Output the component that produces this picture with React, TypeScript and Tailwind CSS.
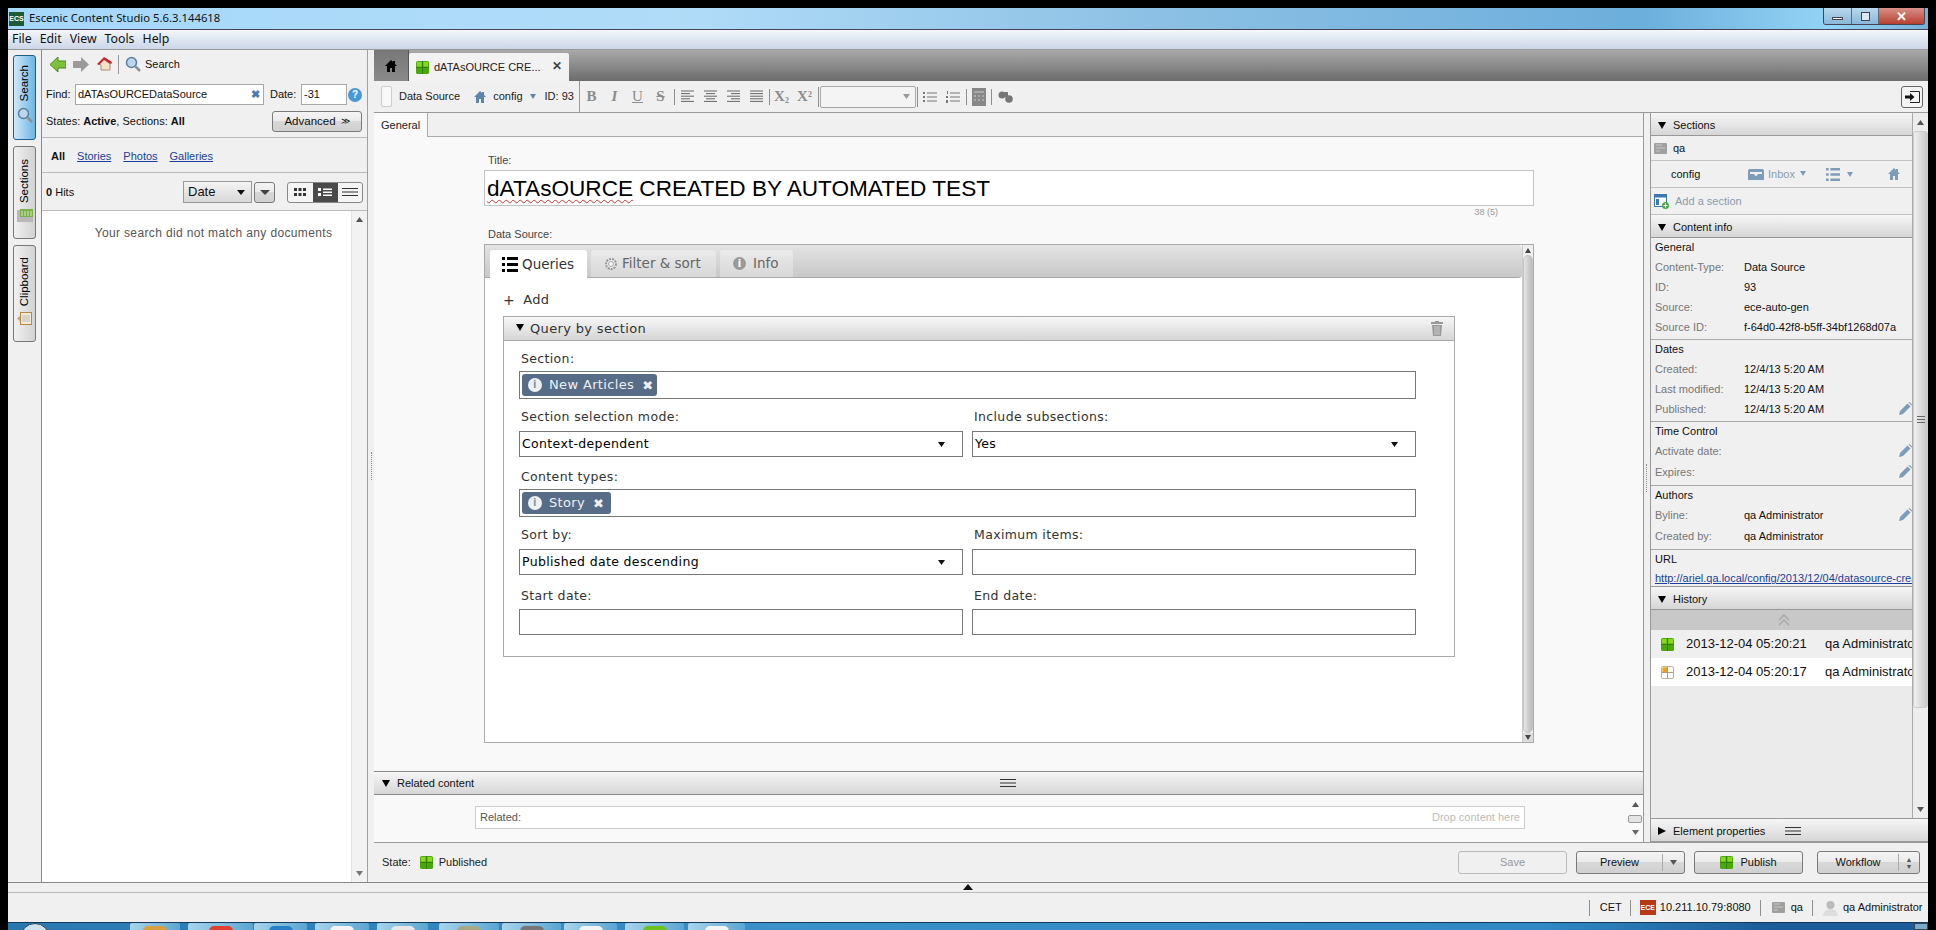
import React from 'react';

const SANS = 'font-["Liberation_Sans",Arial,sans-serif]';
const thinBtn = 'border border-[#7a7a7a] rounded-[3px] bg-[linear-gradient(#f4f4f4_0%,#ececec_45%,#d8d8d8_50%,#d0d0d0_100%)]';
const headBg = 'bg-[linear-gradient(#f6f6f6,#d6d6d6)]';

const Tri = ({ right }: { right?: boolean }) => (
  <svg width="10" height="10" viewBox="0 0 10 10" className="shrink-0">
    {right ? <path d="M1 1 L9 5 L1 9 Z" fill="#000" /> : <path d="M1 2 H9 L5 9 Z" fill="#000" />}
  </svg>
);

const Caret = ({ color = '#222', w = 8 }: { color?: string; w?: number }) => (
  <svg width={w} height="5" viewBox="0 0 8 5" preserveAspectRatio="none" className="shrink-0">
    <path d="M0 0 H8 L4 5 Z" fill={color} />
  </svg>
);

const StateIcon = ({ size = 14, draft }: { size?: number; draft?: boolean }) => (
  <svg width={size} height={size} viewBox="0 0 14 14" className="shrink-0">
    {draft ? (
      <>
        <rect x="0.5" y="0.5" width="13" height="13" rx="1.5" fill="#fff" stroke="#b0a898" />
        <rect x="1.5" y="1.5" width="5" height="5" fill="#f0a020" />
        <path d="M7 1 V13 M1 7 H13" stroke="#b09070" />
      </>
    ) : (
      <>
        <rect x="0" y="0" width="14" height="14" rx="2" fill="#4aa80a" />
        <rect x="1" y="1" width="5" height="5" fill="#8ad81a" />
        <rect x="8" y="1" width="5" height="5" fill="#8ad81a" />
        <path d="M7 0 V14 M0 7 H14" stroke="#2f7d06" />
      </>
    )}
  </svg>
);

const Pencil = () => (
  <svg width="13" height="13" viewBox="0 0 13 13" className="shrink-0">
    <path d="M0 13 L1 9 L8.5 1.5 L11.5 4.5 L4 12 Z" fill="#7d9cb8" />
    <path d="M9.5 0.5 L10.5 0 L13 2.5 L12.5 3.5 Z" fill="#7d9cb8" />
  </svg>
);

const HomeIcon = ({ color = '#000', size = 12 }: { color?: string; size?: number }) => (
  <svg width={size} height={size} viewBox="0 0 12 12" className="shrink-0">
    <path d="M6 0 L8 2 V1 H10 V4 L12 6 H10 V12 H7 V8 H5 V12 H2 V6 H0 Z" fill={color} />
  </svg>
);

const SectionIcon = () => (
  <svg width="13" height="11" viewBox="0 0 13 11" className="shrink-0">
    <rect width="13" height="11" rx="1" fill="#a0a0a0" />
    <path d="M2 2 H8 M2 5 H11 M2 8 H6" stroke="#c8c8c8" />
  </svg>
);

const ListIcon = ({ color = '#000', w = 16 }: { color?: string; w?: number }) => (
  <svg width={w} height={w} viewBox="0 0 16 16" className="shrink-0">
    <path d="M0 1 H3 V4 H0 Z M0 7 H3 V10 H0 Z M0 13 H3 V16 H0 Z M5 1 H16 V4 H5 Z M5 7 H16 V10 H5 Z M5 13 H16 V16 H5 Z" fill={color} />
  </svg>
);

const Lines = () => (
  <svg width="16" height="8" viewBox="0 0 16 8" className="shrink-0">
    <path d="M0 0.5 H16 M0 4 H16 M0 7.5 H16" stroke="#333" />
  </svg>
);

const Magnifier = ({ size = 16 }: { size?: number }) => (
  <svg width={size} height={size} viewBox="0 0 16 16" className="shrink-0">
    <circle cx="6.5" cy="6.5" r="5" fill="#bcd6ee" stroke="#5a7fa0" strokeWidth="1.5" />
    <path d="M10.5 10.5 L15 15" stroke="#8a8f96" strokeWidth="2.5" />
  </svg>
);

const Splitter = () => (
  <div className="w-[6px] shrink-0 bg-[#f0f0f0] flex items-center justify-center">
    <div className="w-0 h-[28px] border-l border-dotted border-[#888]" />
  </div>
);

const RailTab = ({ label, active, h, icon }: { label: string; active?: boolean; h: string; icon: React.ReactNode }) => (
  <div
    className={`${h} w-[23px] rounded-[3px] border flex flex-col-reverse items-center justify-start pb-[16px] gap-[6px] ${
      active
        ? 'border-[#1d5f8a] bg-[linear-gradient(90deg,#cfe8f8,#6db5e3)]'
        : 'border-[#777] bg-[linear-gradient(90deg,#f1f1f1,#d2d2d2)]'
    }`}
  >
    {icon}
    <span className="[writing-mode:vertical-rl] rotate-180 text-[11.5px] leading-none text-black">{label}</span>
  </div>
);

const Rail = () => (
  <div className={`w-[34px] shrink-0 border-r border-[#8a8a8a] bg-[#f0f0f0] pl-[5px] pt-[5px] flex flex-col gap-[6px] ${SANS}`}>
    <RailTab label="Search" active h="h-[85px]" icon={<Magnifier />} />
    <RailTab
      label="Sections"
      h="h-[93px]"
      icon={
        <svg width="16" height="13" viewBox="0 0 16 13">
          <rect y="1" width="16" height="12" fill="#b8b8b8" />
          <rect x="3" y="0" width="13" height="8" fill="#7cb04a" />
          <path d="M5 2 V7 M8 2 V7 M11 2 V7 M14 2 V7" stroke="#d8e8c0" />
        </svg>
      }
    />
    <RailTab
      label="Clipboard"
      h="h-[97px]"
      icon={
        <svg width="15" height="13" viewBox="0 0 15 13">
          <rect x="3.5" y="0.5" width="11" height="12" fill="#f4ecd8" stroke="#b8863c" />
          <path d="M6 3 V10 M8 3 V10 M10 3 V10 M12 3 V10" stroke="#bbb" />
          <path d="M0 6.5 L3 4 V9 Z" fill="#b8a888" />
        </svg>
      }
    />
  </div>
);

const LeftPanel = () => (
  <div className={`w-[326px] shrink-0 bg-[#f0f0f0] flex flex-col border-r border-[#a0a0a0] text-[11px] text-[#111] ${SANS}`}>
    <div className="h-[34px] shrink-0 flex items-center pl-[8px] pb-[6px]">
      <svg width="16" height="15" viewBox="0 0 16 15" className="shrink-0">
        <path d="M0 7.5 L8 0 V4 H16 V11 H8 V15 Z" fill="#7cc23c" stroke="#4d8a1c" />
      </svg>
      <svg width="16" height="15" viewBox="0 0 16 15" className="ml-[7px] shrink-0">
        <path d="M16 7.5 L8 0 V4 H0 V11 H8 V15 Z" fill="#9a9a9a" />
      </svg>
      <svg width="15" height="14" viewBox="0 0 15 14" className="ml-[8px] shrink-0">
        <path d="M1 7 L8 1 L15 6 L13 7 V13 H4 V8 Z" fill="#f3e2c4" stroke="#a88" />
        <path d="M0 7 L7 0 L15 5 L13 7 L7 3 L2 8 Z" fill="#c8272b" />
      </svg>
      <div className="w-px h-[19px] bg-[#999] ml-[6px]" />
      <div className="ml-[6px]">
        <Magnifier />
      </div>
      <span className="ml-[4px]">Search</span>
    </div>
    <div className="h-[21px] shrink-0 flex items-center pl-[4px]">
      <span className="w-[29px]">Find:</span>
      <div className="w-[189px] h-[21px] border border-[#a8a8a8] bg-white flex items-center pl-[2px] pr-[2px] justify-between">
        <span>dATAsOURCEDataSource</span>
        <span className="text-[#4a78b0] font-bold text-[11px] leading-none pr-[1px]">✖</span>
      </div>
      <span className="ml-[6px] w-[31px]">Date:</span>
      <div className="w-[46px] h-[21px] border border-[#a8a8a8] bg-white flex items-center pl-[2px]">-31</div>
      <div className="ml-px w-[14px] h-[14px] rounded-full bg-[#4a97d6] text-white text-[10px] font-bold leading-[14px] text-center">?</div>
    </div>
    <div className="h-[33px] shrink-0 flex items-center justify-between pl-[4px] pr-[5px] pt-px border-b border-[#bbb]">
      <span>
        States: <b>Active</b>, Sections: <b>All</b>
      </span>
      <div className={`w-[90px] h-[21px] ${thinBtn} flex items-center justify-center gap-[5px] text-[11.5px]`}>
        Advanced <span className="text-[9px] leading-none">≫</span>
      </div>
    </div>
    <div className="h-[35px] shrink-0 flex items-center pl-[9px] pt-[3px] gap-[12px] border-b border-[#bbb]">
      <b>All</b>
      <span className="text-[#1a3f9c] underline">Stories</span>
      <span className="text-[#1a3f9c] underline">Photos</span>
      <span className="text-[#1a3f9c] underline">Galleries</span>
    </div>
    <div className="h-[38px] shrink-0 flex items-center pl-[4px] pt-px border-b border-[#bbb]">
      <span className="w-[137px]">
        <b>0</b> Hits
      </span>
      <div className="w-[69px] h-[22px] border border-[#999] bg-[linear-gradient(#f4f4f4,#d8d8d8)] flex items-center justify-between pl-[4px] pr-[6px] text-[13px]">
        Date <Caret color="#111" />
      </div>
      <div className={`ml-[2px] w-[21px] h-[21px] ${thinBtn} flex items-center justify-center`}>
        <Caret color="#444" w={10} />
      </div>
      <div className="ml-[12px] w-[76px] h-[21px] border border-[#888] rounded-[3px] flex overflow-hidden bg-[#f4f4f4]">
        <div className="flex-1 flex items-center justify-center">
          <svg width="12" height="8" viewBox="0 0 12 8">
            <path d="M0 0 H3 V3 H0 Z M4.5 0 H7.5 V3 H4.5 Z M9 0 H12 V3 H9 Z M0 5 H3 V8 H0 Z M4.5 5 H7.5 V8 H4.5 Z M9 5 H12 V8 H9 Z" fill="#333" />
          </svg>
        </div>
        <div className="w-[25px] bg-[#4a4a4a] flex items-center justify-center">
          <svg width="14" height="9" viewBox="0 0 14 9">
            <path d="M0 0 H3 V3 H0 Z M0 5 H3 V8 H0 Z M5 0.5 H14 V2 H5 Z M5 3.5 H14 V5 H5 Z M5 6.5 H14 V8 H5 Z" fill="#fff" />
          </svg>
        </div>
        <div className="flex-1 flex items-center justify-center">
          <Lines />
        </div>
      </div>
    </div>
    <div className="flex-1 flex min-h-0">
      <div className="flex-1 bg-white pt-[13px] pl-[34px] text-center text-[12px] text-[#555] tracking-[0.36px]">Your search did not match any documents</div>
      <div className="w-[16px] bg-[#f2f2f2] border-l border-[#e4e4e4] flex flex-col justify-between items-center py-[6px]">
        <div className="rotate-180">
          <Caret color="#555" w={7} />
        </div>
        <Caret color="#777" w={7} />
      </div>
    </div>
  </div>
);

const Tool = ({ children }: { children: React.ReactNode }) => (
  <span className="w-[23px] shrink-0 text-center font-['Liberation_Serif',serif] text-[15px] font-bold text-[#8c8c8c] leading-none">{children}</span>
);

const Sep = ({ h = 'h-[16px]' }: { h?: string }) => <div className={`w-px ${h} bg-[#8f8f8f] shrink-0`} />;

const AlignIcon = ({ kind }: { kind: 'l' | 'c' | 'r' | 'j' }) => {
  const widths = kind === 'j' ? [13, 13, 13, 13, 13] : [13, 9, 13, 9, 13];
  return (
    <svg width="13" height="13" viewBox="0 0 13 13" className="shrink-0">
      {widths.map((w, i) => {
        const x = kind === 'r' ? 13 - w : kind === 'c' ? (13 - w) / 2 : 0;
        return <rect key={i} x={x} y={i * 2.6 + 0.5} width={w} height="1" fill="#666" />;
      })}
    </svg>
  );
};

const TopTabs = () => (
  <div className={`h-[31px] shrink-0 flex items-end bg-[linear-gradient(#a9a9a9,#6c6c6c)] ${SANS}`}>
    <div className="w-[35px] h-[31px] bg-[linear-gradient(#777,#8a8a8a)] flex items-center justify-center border-r border-[#555]">
      <HomeIcon />
    </div>
    <div className="w-[160px] h-[28px] bg-[#f2f2f2] rounded-t-[2px] flex items-center pl-[7px] text-[11px] text-[#222] whitespace-nowrap">
      <StateIcon size={13} />
      <span className="ml-[5px] w-[118px]">dATAsOURCE CRE...</span>
      <span className="text-[12px] leading-none text-[#444] font-bold -mt-[2px]">✕</span>
    </div>
  </div>
);

const TopToolbar = () => (
  <div className={`h-[32px] shrink-0 bg-[#f0f0f0] flex items-center border-b border-[#999] text-[11px] text-[#222] whitespace-nowrap ${SANS}`}>
    <div className="w-[206px] h-full flex items-center pl-[7px] border-r border-[#999] shrink-0">
      <div className="w-[11px] h-[21px] bg-[#f8f8f8] border border-[#ccc] rounded-[2px] shrink-0" />
      <span className="ml-[7px]">Data Source</span>
      <span className="ml-[14px]">
        <HomeIcon color="#5f86a8" />
      </span>
      <span className="ml-[7px]">config</span>
      <span className="ml-[7px]">
        <Caret color="#5f86a8" w={6} />
      </span>
      <span className="ml-[9px]">ID: 93</span>
    </div>
    <div className="flex items-center">
      <Tool>B</Tool>
      <Tool>
        <i>I</i>
      </Tool>
      <Tool>
        <span className="underline font-normal">U</span>
      </Tool>
      <Tool>
        <s>S</s>
      </Tool>
      <div className="ml-[2px]">
        <Sep />
      </div>
      <div className="flex items-center gap-[10px] px-[6px]">
        <AlignIcon kind="l" />
        <AlignIcon kind="c" />
        <AlignIcon kind="r" />
        <AlignIcon kind="j" />
      </div>
      <Sep />
      <Tool>
        X<sub className="text-[8px]">2</sub>
      </Tool>
      <Tool>
        X<sup className="text-[8px]">2</sup>
      </Tool>
      <div className="ml-[2px]">
        <Sep h="h-[20px]" />
      </div>
      <div className="w-[96px] h-[22px] ml-px border border-[#a8a8a8] bg-[#f4f4f4] rounded-[2px] flex items-center justify-end pr-[5px]">
        <Caret color="#999" w={7} />
      </div>
      <div className="ml-px">
        <Sep h="h-[20px]" />
      </div>
      <div className="ml-[5px] flex items-center gap-[9px]">
        <svg width="14" height="14" viewBox="0 0 14 14">
          <path d="M0 2 H2 V4 H0 Z M0 6 H2 V8 H0 Z M0 10 H2 V12 H0 Z M4 2.5 H14 V3.5 H4 Z M4 6.5 H14 V7.5 H4 Z M4 10.5 H14 V11.5 H4 Z" fill="#777" />
        </svg>
        <svg width="14" height="14" viewBox="0 0 14 14">
          <path d="M1 1 H2 V4 H1 Z M0 6 H2 V8 H0 Z M0 10 H2 V13 H0 Z M4 2.5 H14 V3.5 H4 Z M4 6.5 H14 V7.5 H4 Z M4 10.5 H14 V11.5 H4 Z" fill="#777" />
        </svg>
      </div>
      <div className="ml-[6px]">
        <Sep />
      </div>
      <svg width="14" height="18" viewBox="0 0 14 18" className="ml-[5px]">
        <rect width="14" height="18" fill="#888" />
        <path d="M2 3 H12 V5 H2 Z M2 7 H4 V9 H2 Z M6 7 H8 V9 H6 Z M10 7 H12 V9 H10 Z M2 11 H4 V13 H2 Z M6 11 H8 V13 H6 Z M10 11 H12 V13 H10 Z" fill="#aaa" />
      </svg>
      <div className="ml-[5px]">
        <Sep />
      </div>
      <svg width="15" height="15" viewBox="0 0 15 15" className="ml-[6px]">
        <circle cx="4" cy="6" r="3.5" fill="#777" />
        <circle cx="11" cy="10" r="3.8" fill="#777" />
        <rect x="4" y="3" width="6" height="5" fill="#777" />
      </svg>
    </div>
    <div className="flex-1" />
    <div className="w-[22px] h-[22px] mr-[5px] border border-[#666] rounded-[3px] bg-[#f4f4f4] flex items-center justify-center">
      <svg width="15" height="12" viewBox="0 0 15 12">
        <path d="M5 0.5 H14.5 V11.5 H5" fill="none" stroke="#222" />
        <path d="M0 4.5 H5 V2 L9.5 6 L5 10 V7.5 H0 Z" fill="#111" />
      </svg>
    </div>
  </div>
);

const VerdanaLabel = ({ children }: { children: React.ReactNode }) => (
  <div className="h-[18px] flex items-center pl-[2px] text-[#333]">{children}</div>
);

const Chip = ({ label, w }: { label: string; w: string }) => (
  <div className={`${w} h-[22px] ml-[2px] rounded-[3px] bg-[#566c87] flex items-center pl-[6px] text-white`}>
    <span className="w-[14px] h-[14px] rounded-full bg-[#eef1f4] text-[#8a96a4] text-[10px] leading-[14px] text-center font-bold shrink-0">i</span>
    <span className="ml-[7px] text-[13px] text-[#eef1f4]">{label}</span>
    <span className="ml-[8px] text-[13px] leading-none text-[#eef1f4]">✖</span>
  </div>
);

const Select = ({ value }: { value: string }) => (
  <div className="h-[26px] border border-[#777] bg-white flex items-center justify-between pl-[2px] pr-[17px] text-black">
    {value}
    <Caret color="#111" w={7} />
  </div>
);

const Input = ({ h }: { h: string }) => <div className={`${h} border border-[#777] bg-white`} />;

const QueryForm = () => (
  <div className="ml-[18px] w-[952px] h-[341px] border border-[#aaa] font-['DejaVu_Sans',sans-serif] text-[12.5px] tracking-[0.35px]">
    <div className={`h-[24px] ${headBg} border-b border-[#aaa] flex items-center pl-[11px] text-[#333] relative`}>
      <span className="-mt-[3px]">
        <Tri />
      </span>
      <span className="ml-[5px] text-[13px]">Query by section</span>
      <svg width="12" height="16" viewBox="0 0 12 16" className="absolute right-[11px] top-[3px]">
        <path d="M4 1 H8 V2 H12 V4 H0 V2 H4 Z M1 5 H11 L10 16 H2 Z" fill="#999" />
        <path d="M4 6 V15 M6 6 V15 M8 6 V15" stroke="#ccc" />
      </svg>
    </div>
    <div className="pl-[15px] pt-[9px] w-[912px]">
      <VerdanaLabel>Section:</VerdanaLabel>
      <div className="h-[28px] mt-[3px] border border-[#777] flex items-center">
        <Chip label="New Articles" w="w-[135px]" />
      </div>
      <div className="grid grid-cols-2 gap-x-[9px] mt-[9px]">
        <div>
          <VerdanaLabel>Section selection mode:</VerdanaLabel>
          <div className="mt-[5px]">
            <Select value="Context-dependent" />
          </div>
        </div>
        <div>
          <VerdanaLabel>Include subsections:</VerdanaLabel>
          <div className="mt-[5px]">
            <Select value="Yes" />
          </div>
        </div>
      </div>
      <div className="mt-[11px]">
        <VerdanaLabel>Content types:</VerdanaLabel>
      </div>
      <div className="h-[28px] mt-[3px] border border-[#777] flex items-center">
        <Chip label="Story" w="w-[89px]" />
      </div>
      <div className="grid grid-cols-2 gap-x-[9px] mt-[9px]">
        <div>
          <VerdanaLabel>Sort by:</VerdanaLabel>
          <div className="mt-[5px]">
            <Select value="Published date descending" />
          </div>
        </div>
        <div>
          <VerdanaLabel>Maximum items:</VerdanaLabel>
          <div className="mt-[5px]">
            <Input h="h-[26px]" />
          </div>
        </div>
      </div>
      <div className="grid grid-cols-2 gap-x-[9px] mt-[12px]">
        <div>
          <VerdanaLabel>Start date:</VerdanaLabel>
          <div className="mt-[4px]">
            <Input h="h-[26px]" />
          </div>
        </div>
        <div>
          <VerdanaLabel>End date:</VerdanaLabel>
          <div className="mt-[4px]">
            <Input h="h-[26px]" />
          </div>
        </div>
      </div>
    </div>
  </div>
);

const EditorTab = ({ w, icon, label, active }: { w: string; icon: React.ReactNode; label: string; active?: boolean }) => (
  <div
    className={`${w} h-[28px] -mb-px rounded-t-[3px] flex items-center text-[13.5px] ${
      active ? 'bg-white text-[#333] pl-[12px]' : 'bg-[linear-gradient(#eaeaea,#d8d8d8)] border-b border-[#aaa] text-[#666] pl-[13px]'
    }`}
  >
    {icon}
    <span className="ml-[4px]">{label}</span>
  </div>
);

const DataSourceBox = () => (
  <div className="w-[1050px] h-[499px] mt-[1px] border border-[#aaa] bg-white flex">
    <div className="flex-1 min-w-0">
      <div className="h-[33px] rounded-tr-[4px] rounded-br-[4px] bg-[linear-gradient(#e4e4e4,#c8c8c8)] border-b border-[#aaa] pl-[5px] flex items-end gap-[4px] font-['DejaVu_Sans',sans-serif]">
        <EditorTab w="w-[97px]" active label="Queries" icon={<ListIcon />} />
        <EditorTab
          w="w-[125px]"
          label="Filter & sort"
          icon={
            <svg width="14" height="14" viewBox="0 0 14 14">
              <circle cx="7" cy="7" r="5" fill="#e8e8e8" stroke="#999" strokeWidth="2" strokeDasharray="2 1" />
              <circle cx="7" cy="7" r="2.5" fill="#f4f4f4" stroke="#aaa" />
            </svg>
          }
        />
        <EditorTab
          w="w-[73px]"
          label="Info"
          icon={
            <span className="w-[13px] h-[13px] rounded-full bg-[#999] text-white text-[10px] leading-[13px] text-center font-bold mr-[3px]">i</span>
          }
        />
      </div>
      <div className="h-[38px] pl-[18px] pt-[6px] flex items-center text-[13px] text-[#333] font-['DejaVu_Sans',sans-serif] tracking-[0.4px]">
        <span className="text-[14px] leading-none">+</span>
        <span className="ml-[8px]">Add</span>
      </div>
      <QueryForm />
    </div>
    <div className="w-[11px] bg-[#f0f0f0] border-l border-[#ccc] flex flex-col items-center">
      <div className="h-[10px] flex items-center justify-center">
        <div className="rotate-180">
          <Caret color="#444" w={6} />
        </div>
      </div>
      <div className="flex-1 w-[10px] rounded-[5px] border border-[#c4c4c4] bg-[linear-gradient(90deg,#e4e4e4,#bcbcbc)]" />
      <div className="h-[9px] flex items-center justify-center bg-[#ddd] w-full">
        <Caret color="#444" w={6} />
      </div>
    </div>
  </div>
);

const CenterPane = () => (
  <div className={`w-[1270px] shrink-0 flex flex-col bg-[#f9f9f9] border-r border-[#999] ${SANS}`}>
    <div className="h-[24px] shrink-0 flex text-[11px] text-[#222]">
      <div className="w-[54px] flex items-center pl-[7px] border-r border-[#aaa]">General</div>
      <div className="flex-1 bg-[#f0f0f0] border-b border-[#aaa]" />
    </div>
    <div className="flex-1 pl-[110px] min-h-0">
      <div className="h-[17px] mt-[15px] pl-[4px] text-[11px] text-[#444] flex items-center">Title:</div>
      <div className="w-[1050px] h-[36px] mt-[1px] border border-[#c4c4c4] bg-white flex items-center pl-[2px] pt-[3px] text-[22.6px] text-black leading-none whitespace-nowrap">
        <span className="underline decoration-wavy decoration-[#d03030] decoration-1 underline-offset-[3px]">dATAsOURCE</span>
        <span>&nbsp;CREATED BY AUTOMATED TEST</span>
      </div>
      <div className="w-[1014px] h-[13px] text-right text-[9px] leading-[13px] text-[#999]">38 (5)</div>
      <div className="h-[17px] mt-[7px] pl-[4px] text-[11px] text-[#444] flex items-center">Data Source:</div>
      <DataSourceBox />
    </div>
    <div className={`h-[24px] shrink-0 ${headBg} border-y border-[#888] flex items-center pl-[7px] text-[11px] text-[#111]`}>
      <div className="w-[619px] flex items-center gap-[6px]">
        <Tri />
        Related content
      </div>
      <Lines />
    </div>
    <div className="h-[47px] shrink-0 flex bg-[#f9f9f9]">
      <div className="flex-1 pl-[101px] pt-[11px]">
        <div className="w-[1050px] h-[23px] border border-[#ccc] bg-white flex items-center justify-between px-[4px] text-[11px]">
          <span className="text-[#555]">Related:</span>
          <span className="text-[#bbb]">Drop content here</span>
        </div>
      </div>
      <div className="w-[16px] flex flex-col items-center justify-between py-[7px]">
        <div className="rotate-180">
          <Caret color="#555" w={7} />
        </div>
        <div className="w-[14px] h-[8px] border border-[#999] rounded-[2px] bg-[#e4e4e4]" />
        <Caret color="#666" w={7} />
      </div>
    </div>
  </div>
);

const InfoRow = ({ label, value, edit, tall }: { label: string; value?: string; edit?: boolean; tall?: boolean }) => (
  <div className={`${tall ? 'h-[21px]' : 'h-[20px]'} flex items-center relative whitespace-nowrap`}>
    <span className="w-[93px] pl-[4px] text-[#777] shrink-0">{label}</span>
    <span className="text-[#111]">{value}</span>
    {edit && (
      <span className="absolute right-0 top-[3px]">
        <Pencil />
      </span>
    )}
  </div>
);

const GroupTitle = ({ children }: { children: React.ReactNode }) => (
  <div className="h-[19px] flex items-center pl-[4px] text-[#111]">{children}</div>
);

const PanelHead = ({ title, right }: { title: string; right?: boolean }) => (
  <div className={`h-[23px] shrink-0 ${headBg} border-b border-[#999] flex items-center pl-[6px] pt-[2px] gap-[6px] text-[11px] text-[#111]`}>
    <Tri right={right} />
    {title}
    {right && (
      <span className="ml-[14px]">
        <Lines />
      </span>
    )}
  </div>
);

const HistoryRow = ({ time, bg, draft }: { time: string; bg: string; draft?: boolean }) => (
  <div className={`h-[28px] ${bg} flex items-center pl-[10px] text-[13px] text-[#111] whitespace-nowrap overflow-hidden`}>
    <StateIcon size={13} draft={draft} />
    <span className="ml-[12px] w-[139px] shrink-0">{time}</span>
    <span>qa Administrator</span>
  </div>
);

const RightPane = () => (
  <div className={`flex-1 min-w-0 flex flex-col ml-[6px] text-[11px] border-l border-[#999] ${SANS}`}>
    <div className="flex-1 min-h-0 flex">
      <div className="w-[261px] shrink-0 flex flex-col bg-[#ebebeb] overflow-hidden">
        <PanelHead title="Sections" />
        <div className="h-[25px] flex items-center pl-[3px] gap-[6px] border-b border-[#c4c4c4] bg-[#f0f0f0] text-[#111]">
          <SectionIcon />
          qa
        </div>
        <div className="h-[27px] flex items-center pl-[20px] border-b border-[#c4c4c4] bg-[#f0f0f0] text-[#111] relative">
          <span className="w-[77px]">config</span>
          <svg width="16" height="11" viewBox="0 0 16 11">
            <path d="M0 2 Q0 0 2 0 H14 Q16 0 16 2 V11 H0 Z" fill="#7d9cb8" />
            <path d="M2 3 H14 V5 H10 Q9 7 8 7 Q7 7 6 5 H2 Z" fill="#f0f0f0" />
          </svg>
          <span className="ml-[4px] text-[#8a9cb0]">Inbox</span>
          <span className="ml-[5px] -mt-px">
            <Caret color="#7d9cb8" w={6} />
          </span>
          <span className="ml-[20px]">
            <ListIcon color="#7d9cb8" w={14} />
          </span>
          <span className="ml-[7px]">
            <Caret color="#7d9cb8" w={6} />
          </span>
          <span className="absolute left-[237px] top-[7px]">
            <HomeIcon color="#7d9cb8" />
          </span>
        </div>
        <div className="h-[27px] flex items-center pl-[3px] gap-[6px] border-b border-[#c4c4c4] bg-[#f0f0f0] text-[#8a9cb0]">
          <svg width="15" height="15" viewBox="0 0 15 15">
            <rect x="0.5" y="0.5" width="12" height="12" fill="#fff" stroke="#3a78b4" />
            <rect x="1" y="1" width="11" height="2.5" fill="#3a78b4" />
            <rect x="2" y="5" width="3" height="6" fill="#3a78b4" />
            <circle cx="11.5" cy="11.5" r="3.5" fill="#4aa84a" />
            <path d="M9.5 11.5 H13.5 M11.5 9.5 V13.5" stroke="#fff" />
          </svg>
          Add a section
        </div>
        <PanelHead title="Content info" />
        <div className="bg-[#f0f0f0]">
          <div className="pb-[2px] border-b border-[#aaa]">
            <GroupTitle>General</GroupTitle>
            <InfoRow label="Content-Type:" value="Data Source" />
            <InfoRow label="ID:" value="93" />
            <InfoRow label="Source:" value="ece-auto-gen" />
            <InfoRow label="Source ID:" value="f-64d0-42f8-b5ff-34bf1268d07a" />
          </div>
          <div className="pb-[2px] border-b border-[#aaa]">
            <GroupTitle>Dates</GroupTitle>
            <InfoRow label="Created:" value="12/4/13 5:20 AM" />
            <InfoRow label="Last modified:" value="12/4/13 5:20 AM" />
            <InfoRow label="Published:" value="12/4/13 5:20 AM" edit />
          </div>
          <div className="pb-[2px] border-b border-[#aaa]">
            <GroupTitle>Time Control</GroupTitle>
            <InfoRow label="Activate date:" edit tall />
            <InfoRow label="Expires:" edit tall />
          </div>
          <div className="pb-[2px] border-b border-[#aaa]">
            <GroupTitle>Authors</GroupTitle>
            <InfoRow label="Byline:" value="qa Administrator" edit tall />
            <InfoRow label="Created by:" value="qa Administrator" tall />
          </div>
          <GroupTitle>URL</GroupTitle>
          <div className="h-[17px] pl-[4px] pt-[2px] flex items-center text-[#1a3f9c] underline whitespace-nowrap overflow-hidden">
            http://ariel.qa.local/config/2013/12/04/datasource-crea
          </div>
        </div>
        <div className="h-px bg-[#999] shrink-0" />
        <PanelHead title="History" />
        <div className="h-[20px] shrink-0 bg-[#c8c8c8] flex items-center justify-center pl-[4px]">
          <svg width="12" height="12" viewBox="0 0 12 12">
            <path d="M1 6 L6 1 L11 6 M1 11 L6 6 L11 11" fill="none" stroke="#aaa" strokeWidth="1.5" />
          </svg>
        </div>
        <HistoryRow time="2013-12-04 05:20:21" bg="bg-[#efefef]" />
        <HistoryRow time="2013-12-04 05:20:17" bg="bg-white" draft />
      </div>
      <div className="w-[16px] shrink-0 bg-[#ededed] border-l border-[#aaa] flex flex-col items-center">
        <div className="h-[18px] flex items-center">
          <div className="rotate-180">
            <Caret color="#555" w={7} />
          </div>
        </div>
        <div className="w-[15px] h-[577px] rounded-[3px] border border-[#ccc] bg-[linear-gradient(90deg,#f0f0f0,#c8c8c8)] flex items-center justify-center">
          <svg width="8" height="7" viewBox="0 0 8 7">
            <path d="M0 0.5 H8 M0 3.5 H8 M0 6.5 H8" stroke="#666" />
          </svg>
        </div>
        <div className="flex-1 flex items-end pb-[6px]">
          <Caret color="#555" w={7} />
        </div>
      </div>
    </div>
    <div className="border-t border-[#999] shrink-0">
      <PanelHead title="Element properties" right />
    </div>
  </div>
);

const FootBtn = ({ w, children, disabled, className = '' }: { w: string; children: React.ReactNode; disabled?: boolean; className?: string }) => (
  <div
    className={`${w} h-[23px] rounded-[3px] flex items-center text-[11px] ${className} ${
      disabled ? 'border border-[#bbb] text-[#999] bg-[#f0f0f0] justify-center' : `${thinBtn} text-[#111]`
    }`}
  >
    {children}
  </div>
);

const Footer = () => (
  <div className={`h-[40px] shrink-0 bg-[#f0f0f0] border-t border-[#999] flex items-center pl-[8px] pr-[8px] text-[11px] text-[#222] ${SANS}`}>
    <span>State:</span>
    <span className="ml-[9px]">
      <StateIcon size={13} />
    </span>
    <span className="ml-[6px]">Published</span>
    <div className="flex-1" />
    <FootBtn w="w-[109px]" disabled>
      Save
    </FootBtn>
    <FootBtn w="w-[109px]" className="ml-[9px]">
      <span className="w-[85px] text-center">Preview</span>
      <span className="w-px h-[17px] bg-[#aaa]" />
      <span className="flex-1 flex justify-center">
        <Caret color="#555" w={7} />
      </span>
    </FootBtn>
    <FootBtn w="w-[109px]" className="ml-[9px] justify-center gap-[7px]">
      <StateIcon size={13} />
      Publish
    </FootBtn>
    <FootBtn w="w-[103px]" className="ml-[14px]">
      <span className="w-[80px] text-center">Workflow</span>
      <span className="w-px h-[17px] bg-[#aaa]" />
      <span className="flex-1 text-center text-[7px] leading-[7px] text-[#555]">
        ▲
        <br />▼
      </span>
    </FootBtn>
  </div>
);

const StatusBar = () => (
  <div className={`shrink-0 bg-[#f0f0f0] ${SANS}`}>
    <div className="h-[10px] border-b border-[#bbb] flex justify-center">
      <svg width="10" height="6" viewBox="0 0 10 6" className="mt-[1px]">
        <path d="M0 6 L5 0 L10 6 Z" fill="#111" />
      </svg>
    </div>
    <div className="h-[29px] flex items-center justify-end pr-[7px] text-[11px] text-[#111] whitespace-nowrap">
      <Sep />
      <span className="ml-[10px] mr-[8px]">CET</span>
      <Sep />
      <span className="ml-[9px] w-[16px] h-[15px] bg-[#b33a12] text-white text-[7px] font-bold leading-[15px] text-center">ECE</span>
      <span className="ml-[4px] mr-[9px]">10.211.10.79:8080</span>
      <Sep />
      <span className="ml-[11px]">
        <SectionIcon />
      </span>
      <span className="ml-[6px] mr-[9px]">qa</span>
      <Sep />
      <svg width="15" height="16" viewBox="0 0 15 16" className="ml-[10px]">
        <circle cx="7.5" cy="5" r="4" fill="#bbb" />
        <path d="M0 16 Q1 9 7.5 9 Q14 9 15 16 Z" fill="#ddd" />
      </svg>
      <span className="ml-[5px] w-[78px]">qa Administrator</span>
    </div>
  </div>
);

const taskButtons = ['w-[50px]', 'w-[65px]', 'w-[53px]', 'w-[54px]', 'w-[51px]', 'w-[60px]', 'w-[59px]', 'w-[53px]', 'w-[59px]', 'w-[57px]'];
const taskGaps = ['ml-[122px]', 'ml-[8px]', 'ml-px', 'ml-[8px]', 'ml-[8px]', 'ml-[11px]', 'ml-[3px]', 'ml-[3px]', 'ml-[8px]', 'ml-[4px]'];
const taskDots = ['bg-[#d8a040]', 'bg-[#e04030]', 'bg-[#2a80c8]', 'bg-[#f4f4f4]', 'bg-[#e8e8e8]', 'bg-[#a8a888]', 'bg-[#777]', 'bg-[#f4f4f4]', 'bg-[#6cc020]', 'bg-[#f4f4f4]'];

const TaskBar = () => (
  <div className="flex-1 border-t border-[#123a5c] bg-[linear-gradient(90deg,#2a78b0_0%,#3a90c8_40%,#3088c4_80%,#1c5c98_92%,#1c5c98_100%)] flex overflow-hidden relative">
    <div className="absolute left-[12px] top-0 w-[30px] h-[30px] rounded-full bg-[#cfe2ee] border border-[#345]" />
    {taskButtons.map((w, i) => (
      <div key={i} className={`${w} ${taskGaps[i]} h-[7px] shrink-0 bg-[linear-gradient(90deg,#a8d4ea,#5aa6d2)] rounded-t-[2px] flex justify-center pt-[3px]`}>
        <div className={`w-[24px] h-[10px] rounded-t-[5px] ${taskDots[i]}`} />
      </div>
    ))}
    <div className="absolute right-0 top-0 w-[14px] h-[7px] bg-[#7aaac8] border border-[#345]" />
  </div>
);

const TitleBar = () => (
  <div className="h-[22px] shrink-0 bg-[linear-gradient(90deg,#a6d8fa_0%,#b0dcf8_35%,#8cc0e4_60%,#6caedc_85%,#94d4f6_95%,#7ab0d8_100%)] border-b border-[#445] flex items-center pl-px relative font-['Noto_Sans',sans-serif] text-[11.3px] text-[#111]">
    <span className="w-[15px] h-[14px] bg-[#1f5a36] text-white text-[7px] font-bold leading-[14px] text-center font-['Liberation_Sans',sans-serif]">ECS</span>
    <span className="ml-[5px]">Escenic Content Studio 5.6.3.144618</span>
    <div className="absolute right-[3px] top-0 h-[17px] flex rounded-b-[3px] overflow-hidden border border-t-0 border-[#445]">
      <div className="w-[28px] bg-[linear-gradient(#b8d8ec,#8ab8d8)] border-r border-[#667] flex items-center justify-center">
        <div className="w-[11px] h-[3px] mt-[4px] bg-white border border-[#445]" />
      </div>
      <div className="w-[27px] bg-[linear-gradient(#b8d8ec,#8ab8d8)] border-r border-[#667] flex items-center justify-center">
        <div className="w-[9px] h-[9px] bg-[#dde8f0] border border-[#445]" />
      </div>
      <div className="w-[45px] bg-[linear-gradient(#d89088,#b84030)] flex items-center justify-center text-[13px] font-bold leading-none text-white">✕</div>
    </div>
  </div>
);

const MenuBar = () => (
  <div className="h-[20px] shrink-0 bg-[linear-gradient(#f4f7fb,#ccd6e8)] border-b border-[#999] flex items-center pl-[4px] gap-[8px] font-['Noto_Sans',sans-serif] text-[12.3px] text-[#111]">
    <span>File</span>
    <span>Edit</span>
    <span>View</span>
    <span>Tools</span>
    <span>Help</span>
  </div>
);

export default function App() {
  return (
    <div className="w-[1936px] h-[930px] bg-black overflow-hidden pt-[8px] px-[8px] flex flex-col">
      <TitleBar />
      <MenuBar />
      <div className="h-[833px] shrink-0 flex border-b border-[#888]">
        <Rail />
        <LeftPanel />
        <Splitter />
        <div className="flex-1 min-w-0 flex flex-col">
          <TopTabs />
          <TopToolbar />
          <div className="flex-1 min-h-0 flex bg-[#f0f0f0]">
            <CenterPane />
            <div className="w-0 self-center">
              <div className="ml-[2px] w-0 h-[28px] border-l border-dotted border-[#888]" />
            </div>
            <RightPane />
          </div>
          <Footer />
        </div>
      </div>
      <StatusBar />
      <TaskBar />
    </div>
  );
}
